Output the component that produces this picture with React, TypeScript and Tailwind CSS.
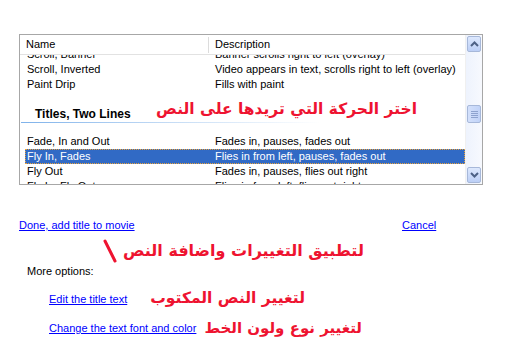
import React from "react";

const ar = "font-['DejaVu_Sans',sans-serif] font-bold text-[#ee1330] leading-none whitespace-nowrap";

function Row({ name, desc, selected }: { name: string; desc: string; selected?: boolean }) {
  return (
    <div
      className={
        "ml-[5px] h-[15px] flex items-center whitespace-nowrap " +
        (selected ? "bg-[#316ac5] text-white outline outline-1 outline-dotted outline-[#e8a23c] -outline-offset-1" : "text-black")
      }
    >
      <div className="w-[184px] pl-[2px]">{name}</div>
      <div className="pl-[6px]">{desc}</div>
    </div>
  );
}

function Chevron({ up }: { up?: boolean }) {
  return (
    <svg width="9" height="6" viewBox="0 0 9 6">
      <path
        d={up ? "M1 5 L4.5 1.5 L8 5" : "M1 1 L4.5 4.5 L8 1"}
        fill="none"
        stroke="#4d6185"
        strokeWidth="2"
      />
    </svg>
  );
}

export default function App() {
  return (
    <div className="relative w-[505px] h-[361px] bg-white overflow-hidden font-['Liberation_Sans',sans-serif] text-[11px] text-black">
      <div className="pt-[34px] pl-[19px]">
        <div className="w-[464px] h-[151px] border border-[#a7a7a7] flex">
          <div className="flex-1 flex flex-col overflow-hidden">
            <div className="h-[20px] shrink-0 flex items-center border-b border-[#e2e2e2] bg-white relative z-10">
              <div className="w-[189px] pl-[6px] h-[16px] flex items-center border-r border-[#dcdcdc]">Name</div>
              <div className="pl-[6px]">Description</div>
            </div>
            <div className="flex-1 overflow-hidden">
              <div className="-mt-[8px]">
                <Row name="Scroll, Banner" desc="Banner scrolls right to left (overlay)" />
                <Row name="Scroll, Inverted" desc="Video appears in text, scrolls right to left (overlay)" />
                <Row name="Paint Drip" desc="Fills with paint" />
                <div className="h-[42px] pt-[15px]">
                  <div className="h-[14px] pl-[15px] font-bold text-[12px] leading-[14px]">Titles, Two Lines</div>
                  <div className="mt-[1px] h-[1px] w-[300px] ml-[1px] bg-gradient-to-r from-[#7fb2ea] via-[#c5dcf5] to-white" />
                </div>
                <Row name="Fade, In and Out" desc="Fades in, pauses, fades out" />
                <Row name="Fly In, Fades" desc="Flies in from left, pauses, fades out" selected />
                <Row name="Fly Out" desc="Fades in, pauses, flies out right" />
                <Row name="Fly In, Fly Out" desc="Flies in from left, flies out right" />
              </div>
            </div>
          </div>
          <div className="w-[17px] shrink-0 flex flex-col bg-gradient-to-r from-[#eef3fd] to-[#f7f9fe] border-l border-[#f0f0f0]">
            <div className="mx-[1px] mt-[1px] h-[16px] rounded-[2px] border border-[#a7b8d9] bg-gradient-to-b from-[#dde8fd] to-[#bccff6] flex items-center justify-center">
              <Chevron up />
            </div>
            <div className="flex-1 relative">
              <div className="absolute left-[1px] right-[1px] top-[53px] h-[18px] rounded-[2px] border border-[#a7b8d9] bg-gradient-to-r from-[#d3e0fb] to-[#c1d3f8] flex flex-col items-center justify-center gap-[1px]">
                <div className="w-[7px] h-[1px] bg-[#8ea3cf]" />
                <div className="w-[7px] h-[1px] bg-[#8ea3cf]" />
                <div className="w-[7px] h-[1px] bg-[#8ea3cf]" />
                <div className="w-[7px] h-[1px] bg-[#8ea3cf]" />
              </div>
            </div>
            <div className="mx-[1px] mb-[1px] h-[16px] rounded-[2px] border border-[#a7b8d9] bg-gradient-to-b from-[#dde8fd] to-[#bccff6] flex items-center justify-center">
              <Chevron />
            </div>
          </div>
        </div>
      </div>

      <div className="absolute left-[154px] top-[102px] bg-white pl-[2px]" dir="rtl">
        <span className={ar + " text-[15.5px]"}>اختر الحركة التي تريدها على النص</span>
      </div>

      <div className="mt-[33px] h-[14px] flex items-center pl-[19px]">
        <a href="#" className="text-[#0000ff] underline w-[383px]">Done, add title to movie</a>
        <a href="#" className="text-[#0000ff] underline">Cancel</a>
      </div>

      <div className="mt-[7px] h-[24px] flex items-center pl-[103px]">
        <svg width="14" height="24" viewBox="0 0 14 24">
          <path d="M2 2 L12 22" stroke="#ee1330" strokeWidth="3" strokeLinecap="round" />
        </svg>
        <span className={ar + " ml-[6px] text-[16px]"} dir="rtl">لتطبيق التغييرات واضافة النص</span>
      </div>

      <div className="mt-[1px] h-[14px] flex items-center pl-[27px]">More options:</div>

      <div className="mt-[14px] h-[14px] flex items-center pl-[49px]">
        <a href="#" className="text-[#0000ff] underline">Edit the title text</a>
        <span className={ar + " ml-[23px] text-[15.5px]"} dir="rtl">لتغيير النص المكتوب</span>
      </div>

      <div className="mt-[15px] h-[14px] flex items-center pl-[49px]">
        <a href="#" className="text-[#0000ff] underline">Change the text font and color</a>
        <span className={ar + " ml-[8px] text-[15px]"} dir="rtl">لتغيير نوع ولون الخط</span>
      </div>
    </div>
  );
}
